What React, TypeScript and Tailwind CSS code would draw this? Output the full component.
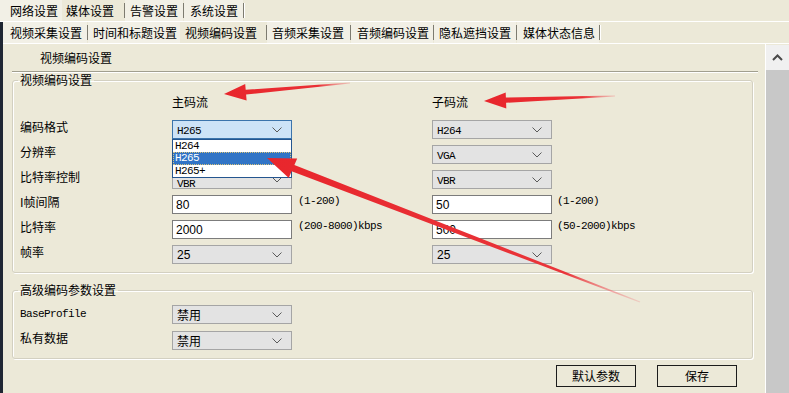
import type { ReactNode } from 'react';

const cjk = "font-['Noto_Sans_CJK_SC',sans-serif]";
const mono = "font-['Liberation_Mono',monospace] text-[11px] tracking-[-0.6px]";
const sans = "font-['Liberation_Sans',sans-serif] text-[12px]";

function ChevronDown() {
	return (
		<svg width="10" height="6" viewBox="0 0 10 6" className="shrink-0">
			<path d="M0.5 0.5 L5 5 L9.5 0.5" fill="none" stroke="#5a5a5a" strokeWidth="1" />
		</svg>
	);
}

function Select({ children, focused, open }: { children?: ReactNode; focused?: boolean; open?: boolean }) {
	return (
		<div className="relative w-[120px]">
			<div
				className={`flex h-[19px] items-center justify-between border pl-[4px] pr-[9px] ${
					focused ? 'border-[#3b74ac] bg-[#cde3f7]' : 'border-[#a5a5a5] bg-[#e3e3e3]'
				}`}
			>
				<span className="leading-[14px]">{children}</span>
				<ChevronDown />
			</div>
			{open && (
				<div className={`absolute left-0 top-full z-10 w-full border border-[#24558f] bg-white ${mono}`}>
					<div className="h-[12px] pl-[2px] leading-[12px]">H264</div>
					<div className="h-[13px] bg-[#3174c6] pl-[2px] leading-[13px] text-white outline-1 -outline-offset-1 outline-dotted outline-[#d8c27a]">H265</div>
					<div className="h-[12px] pl-[2px] leading-[12px]">H265+</div>
				</div>
			)}
		</div>
	);
}

function Input({ value }: { value: string }) {
	return (
		<div className={`flex h-[19px] w-[120px] items-center border border-[#7c7c7c] bg-white pl-[3px] ${sans}`}>
			{value}
		</div>
	);
}

function Row({ label, left, hint1, right, hint2 }: { label: ReactNode; left: ReactNode; hint1?: string; right?: ReactNode; hint2?: string }) {
	return (
		<div className="flex h-[19px] items-start">
			<div className="w-[152px] leading-[14px]">{label}</div>
			{left}
			<div className={`w-[140px] pl-[6px] leading-[12px] ${mono}`}>{hint1}</div>
			{right}
			{hint2 && <div className={`pl-[5px] leading-[12px] ${mono}`}>{hint2}</div>}
		</div>
	);
}

function Tab({ label, selected, className }: { label: string; selected?: boolean; className: string }) {
	return (
		<div className={`flex h-full items-center ${selected ? 'bg-[#ece9d8]' : 'bg-[#f2f0e6]'} ${className}`}>
			<span className="leading-[14px]">{label}</span>
		</div>
	);
}

function Sep() {
	return <div className="my-[3px] w-px self-stretch bg-[#7d7b70] shadow-[1px_0_0_#ffffff]" />;
}

function Arrows() {
	return (
		<svg className="pointer-events-none absolute inset-0 z-20" width="789" height="393" viewBox="0 0 789 393">
			<defs>
				<linearGradient id="a1" gradientUnits="userSpaceOnUse" x1="224" y1="94" x2="350" y2="83">
					<stop offset="0" stopColor="#e8262c" />
					<stop offset="0.75" stopColor="#ea3035" />
					<stop offset="1" stopColor="#f07a7c" stopOpacity="0.35" />
				</linearGradient>
				<linearGradient id="a2" gradientUnits="userSpaceOnUse" x1="484" y1="101" x2="615" y2="96">
					<stop offset="0" stopColor="#e8262c" />
					<stop offset="0.75" stopColor="#ea3035" />
					<stop offset="1" stopColor="#f07a7c" stopOpacity="0.35" />
				</linearGradient>
				<linearGradient id="a3" gradientUnits="userSpaceOnUse" x1="267" y1="158" x2="640" y2="302">
					<stop offset="0" stopColor="#e8262c" />
					<stop offset="0.8" stopColor="#e9353a" />
					<stop offset="1" stopColor="#f08a8c" stopOpacity="0.3" />
				</linearGradient>
			</defs>
			<polygon fill="url(#a1)" points="224,94 245.2,84.1 245.7,89.8 350,82.4 350,83.6 246.1,94.6 246.6,100.6" />
			<polygon fill="url(#a2)" points="484,101 505.7,92.4 505.9,97.6 615,95.4 615,96.6 506.1,102.8 506.3,108.6" />
			<polygon fill="url(#a3)" points="267,158 297.2,158.5 294.4,165 640.3,301.4 639.7,302.6 291.6,171.2 288.8,178" />
		</svg>
	);
}

export default function App() {
	return (
		<div className={`relative h-[393px] w-[789px] overflow-hidden bg-[#ece9d8] text-[12px] text-black ${cjk}`}>
			{/* top tab row */}
			<div className="flex h-[22px] border-b border-white">
				<Tab label="网络设置" className="pl-[10px] pr-[4px]" />
				<Tab label="媒体设置" selected className="pl-[4px] pr-[10px]" />
				<Sep />
				<Tab label="告警设置" className="pl-[5px] pr-[5px]" />
				<Sep />
				<Tab label="系统设置" className="pl-[6px] pr-[5px]" />
				<Sep />
			</div>

			<div className="flex h-[371px] flex-col border-l-[3px] border-[#1f2633]">
				{/* second tab row */}
				<div className="flex h-[22px] border-b border-white">
					<Tab label="视频采集设置" className="pl-[7px] pr-[5px]" />
					<Sep />
					<Tab label="时间和标题设置" className="pl-[5px] pr-[3px]" />
					<Tab label="视频编码设置" selected className="pl-[5px] pr-[9px]" />
					<Sep />
					<Tab label="音频采集设置" className="pl-[5px] pr-[6px]" />
					<Sep />
					<Tab label="音频编码设置" className="pl-[6px] pr-[4px]" />
					<Sep />
					<Tab label="隐私遮挡设置" className="pl-[5px] pr-[5px]" />
					<Sep />
					<Tab label="媒体状态信息" className="pl-[6px] pr-[4px]" />
					<Sep />
				</div>

				<div className="flex flex-1">
					<div className="flex flex-1 flex-col">
						<div className="flex h-[27px] items-center pl-[37px] leading-[14px]">视频编码设置</div>
						<div className="ml-[9px] mr-[7px] h-[2px] border-t border-[#a19f8f] bg-white" />

						<fieldset className="ml-[9px] mr-[12px] rounded-[3px] border border-[#d3d0c1] pb-[8px] pl-[7px] shadow-[inset_1px_1px_0_#ffffff,1px_1px_0_#ffffff]">
							<legend className="-ml-[2px] px-[2px] leading-[14px]">视频编码设置</legend>
							<div className="flex pt-[8px] leading-[14px]">
								<div className="w-[152px]" />
								<div className="w-[260px]">主码流</div>
								<div>子码流</div>
							</div>
							<div className="mt-[11px] flex flex-col gap-[6px]">
								<Row
									label="编码格式"
									left={<Select focused open><span className={mono}>H265</span></Select>}
									right={<Select><span className={mono}>H264</span></Select>}
								/>
								<Row label="分辨率" left={<Select />} right={<Select><span className={mono}>VGA</span></Select>} />
								<Row
									label="比特率控制"
									left={<Select><span className={`${mono} relative top-[3px]`}>VBR</span></Select>}
									right={<Select><span className={mono}>VBR</span></Select>}
								/>
								<Row label="I帧间隔" left={<Input value="80" />} hint1="(1-200)" right={<Input value="50" />} hint2="(1-200)" />
								<Row label="比特率" left={<Input value="2000" />} hint1="(200-8000)kbps" right={<Input value="500" />} hint2="(50-2000)kbps" />
								<Row
									label="帧率"
									left={<Select><span className={sans}>25</span></Select>}
									right={<Select><span className={sans}>25</span></Select>}
								/>
							</div>
						</fieldset>

						<fieldset className="ml-[9px] mr-[12px] mt-[10px] rounded-[3px] border border-[#d3d0c1] pb-[8px] pl-[7px] shadow-[inset_1px_1px_0_#ffffff,1px_1px_0_#ffffff]">
							<legend className="-ml-[2px] px-[2px] leading-[14px]">高级编码参数设置</legend>
							<div className="flex flex-col gap-[7px] pt-[8px]">
								<Row label={<span className={mono}>BaseProfile</span>} left={<Select>禁用</Select>} />
								<Row label="私有数据" left={<Select>禁用</Select>} />
							</div>
						</fieldset>

						<div className="mt-[6px] flex justify-end gap-[21px] pr-[28px]">
							<button className="flex h-[22px] w-[80px] items-center justify-center border border-[#1c1c1c] leading-[14px]">默认参数</button>
							<button className="flex h-[22px] w-[80px] items-center justify-center border border-[#1c1c1c] leading-[14px]">保存</button>
						</div>
					</div>

					{/* scrollbar */}
					<div className="flex w-[24px] flex-col border-l border-white pt-px">
						<div className="flex h-[25px] items-center justify-center bg-[#f0f0f0]">
							<svg width="11" height="7" viewBox="0 0 11 7">
								<path d="M1 6 L5.5 1.5 L10 6" fill="none" stroke="#4a4a4a" strokeWidth="2" />
							</svg>
						</div>
						<div className="flex-1 bg-[#c8c8c8]" />
					</div>
				</div>
			</div>

			<Arrows />
		</div>
	);
}
